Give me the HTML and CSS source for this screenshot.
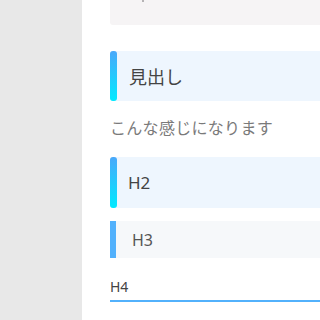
FILE: index.html
```html
<!DOCTYPE html>
<html lang="ja">
<head>
<meta charset="utf-8">
<link rel="stylesheet" href="styles.css">
</head>
<body>
<div class="layout">
  <aside class="sidebar"></aside>
  <main class="main">
    <div class="codebox"><span class="mark"></span></div>
    <h1 class="h-grad">見出し</h1>
    <p class="text">こんな感じになります</p>
    <h2 class="h-grad h2">H2</h2>
    <h3 class="h3">H3</h3>
    <h4 class="h4">H4</h4>
  </main>
</div>
</body>
</html>
```

FILE: styles.css
```css
html, body {
  margin: 0;
  padding: 0;
  width: 320px;
  height: 320px;
  overflow: hidden;
  background: #ffffff;
  font-family: "Noto Sans", "Noto Sans CJK JP", sans-serif;
}
.layout {
  display: flex;
  height: 320px;
}
.sidebar {
  width: 82px;
  flex: 0 0 82px;
  background: #e8e8e8;
}
.main {
  flex: 1;
  padding-left: 28px;
  display: flex;
  flex-direction: column;
  align-items: stretch;
}
.codebox {
  margin-top: -15px;
  height: 40px;
  background: #f6f4f5;
  border-radius: 3px 0 0 3px;
  position: relative;
}
.mark {
  position: absolute;
  left: 32px;
  top: 15px;
  width: 2px;
  height: 2px;
  background: #b5b3b5;
}
h1, h2, h3, h4, p { margin: 0; font-weight: normal; }
.h-grad {
  position: relative;
  margin-top: 26px;
  height: 50px;
  display: flex;
  align-items: center;
  padding-left: 19px;
  background: #eef6fe;
  border-radius: 3px 0 0 3px;
  color: #444444;
  font-family: "Noto Sans CJK JP", sans-serif;
  font-size: 18px;
}
.h-grad::before {
  content: "";
  position: absolute;
  left: 0;
  top: 0;
  bottom: 0;
  width: 7px;
  border-radius: 3px;
  background: linear-gradient(to bottom, #4aa8fa, #00eaff);
}
.text {
  margin-top: 14px;
  line-height: 24px;
  font-size: 16px;
  letter-spacing: 0.3px;
  color: #7a7a7a;
  font-family: "Noto Sans CJK JP", sans-serif;
}
.h2 {
  margin-top: 18px;
  height: 51px;
  font-family: "Noto Sans", sans-serif;
  font-size: 17px;
  padding-left: 18px;
}
.h3 {
  margin-top: 13px;
  height: 37px;
  display: flex;
  align-items: center;
  padding-left: 16px;
  background: #f6f8fa;
  border-left: 6px solid #52b1fc;
  color: #555555;
  font-size: 16px;
}
.h4 {
  margin-top: 19px;
  line-height: 20px;
  padding-bottom: 3px;
  border-bottom: 2px solid #52b1fc;
  color: #444444;
  font-size: 14px;
}
```
